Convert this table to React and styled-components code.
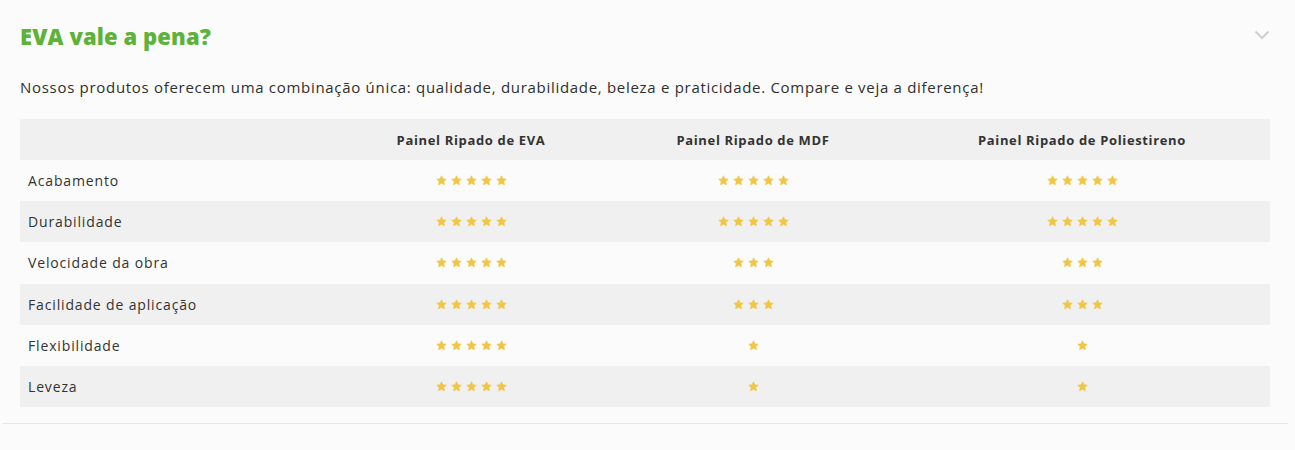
import React from "react";
import styled, { createGlobalStyle } from "styled-components";

const Global = createGlobalStyle`
  html, body { margin: 0; padding: 0; background: #fbfbfb; }
  body { font-family: "Open Sans", "Noto Sans", sans-serif; color: #333; }
`;

const Page = styled.div`
  padding: 0 7px 0 2px;
`;

const Item = styled.section`
  border-bottom: 1px solid #e7e7e7;
  padding: 0 18px 16px 18px;
`;

const Header = styled.div`
  display: flex;
  align-items: center;
  justify-content: space-between;
  height: 72px;
`;

const Title = styled.h2`
  margin: 0;
  font-family: "Open Sans", sans-serif;
  font-weight: 800;
  font-size: 22px;
  letter-spacing: 0.1px;
  color: #5cb338;
`;

const Chevron = styled.svg`
  width: 16px;
  height: 10px;
  margin-top: -2px;
`;

const Intro = styled.p`
  margin: 0 0 17px 0;
  font-size: 15px;
  line-height: 30px;
  color: #2f2f2f;
  letter-spacing: 0.7px;
`;

const Table = styled.div`
  display: grid;
  grid-template-columns: 310px 282px 282px 1fr;
`;

const Row = styled.div`
  display: contents;
  & > * { background: ${(p) => (p.$shade ? "#f0f0f0" : "#fbfbfb")}; }
`;

const Cell = styled.div`
  height: 41.15px;
  display: flex;
  align-items: center;
  justify-content: ${(p) => (p.$label ? "flex-start" : "center")};
  padding: ${(p) => (p.$label ? "0 8px" : "0")};
  font-size: ${(p) => (p.$head ? "13px" : "14px")};
  font-weight: ${(p) => (p.$head ? 700 : 400)};
  letter-spacing: ${(p) => (p.$head ? "0.65px" : "0.85px")};
  color: #333;
`;

const Stars = styled.div`
  display: flex;
  gap: 4px;
`;

const Star = () => (
  <svg width="11" height="11" viewBox="0 0 24 24">
    <path
      d="M12 1.8l3.1 6.6 7.2.9-5.3 5 1.4 7.1L12 17.9l-6.4 3.5 1.4-7.1-5.3-5 7.2-.9z"
      fill="#f1c644"
      stroke="#f1c644"
      strokeWidth="1.5"
      strokeLinejoin="round"
    />
  </svg>
);

const Rating = ({ n }) => (
  <Stars>
    {Array.from({ length: n }).map((_, i) => (
      <Star key={i} />
    ))}
  </Stars>
);

const rows = [
  ["Acabamento", 5, 5, 5],
  ["Durabilidade", 5, 5, 5],
  ["Velocidade da obra", 5, 3, 3],
  ["Facilidade de aplicação", 5, 3, 3],
  ["Flexibilidade", 5, 1, 1],
  ["Leveza", 5, 1, 1],
];

export default function App() {
  return (
    <Page>
      <Global />
      <Item>
        <Header>
          <Title>EVA vale a pena?</Title>
          <Chevron viewBox="0 0 16 10">
            <path d="M1.5 1.5L8 8l6.5-6.5" fill="none" stroke="#cfcfcf" strokeWidth="2" />
          </Chevron>
        </Header>
        <Intro>
          Nossos produtos oferecem uma combinação única: qualidade, durabilidade, beleza e praticidade. Compare e veja a diferença!
        </Intro>
        <Table>
          <Row $shade>
            <Cell $head $label />
            <Cell $head>Painel Ripado de EVA</Cell>
            <Cell $head>Painel Ripado de MDF</Cell>
            <Cell $head>Painel Ripado de Poliestireno</Cell>
          </Row>
          {rows.map((r, i) => (
            <Row key={r[0]} $shade={i % 2 === 1}>
              <Cell $label>{r[0]}</Cell>
              <Cell><Rating n={r[1]} /></Cell>
              <Cell><Rating n={r[2]} /></Cell>
              <Cell><Rating n={r[3]} /></Cell>
            </Row>
          ))}
        </Table>
      </Item>
    </Page>
  );
}
